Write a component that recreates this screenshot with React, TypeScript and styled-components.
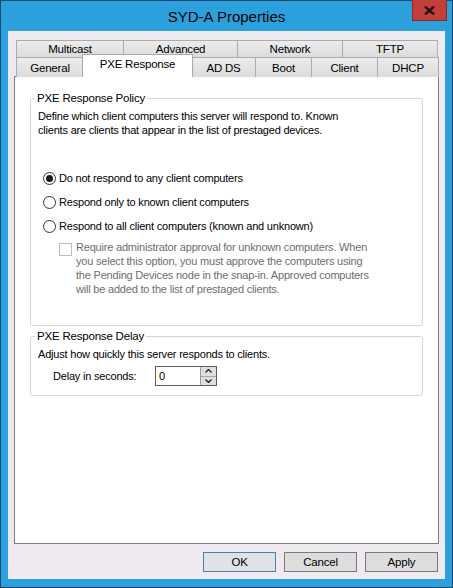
import React from "react";
import styled, { createGlobalStyle, css } from "styled-components";

const GlobalStyle = createGlobalStyle`
  html, body { margin: 0; padding: 0; background: #ffffff; }
  * { box-sizing: border-box; }
  body { font-family: "Liberation Sans", Arial, sans-serif; }
`;

const UI_FONT = `"Liberation Sans", Arial, sans-serif`;

const Window = styled.div`
  width: 453px;
  height: 588px;
  border: 1px solid #17486e;
  background: #2ba0dc;
  display: flex;
  flex-direction: column;
`;

const TitleBar = styled.div`
  position: relative;
  height: 30px;
  display: flex;
  align-items: center;
  justify-content: center;
  flex: none;
`;

const Title = styled.div`
  font-family: ${UI_FONT};
  font-size: 15px;
  color: #000;
  padding-top: 1px;
`;

const CloseButton = styled.div`
  position: absolute;
  top: -1px;
  right: 5px;
  width: 35px;
  height: 21px;
  background: #c3403a;
  border: 1px solid #8e2a27;
  border-top: none;
  display: flex;
  align-items: center;
  justify-content: center;
`;

const Client = styled.div`
  margin: 0 7px 8px 7px;
  height: 548px;
  background: #efeaf0;
  display: flex;
  flex-direction: column;
  padding: 9px 6px 0 6px;
  font-family: ${UI_FONT};
  font-size: 11px;
  letter-spacing: -0.2px;
  color: #000;
`;

const TabStrip = styled.div`
  display: flex;
  flex-direction: column;
  margin: 0 1px 0 2px;
  position: relative;
  z-index: 2;
  margin-bottom: -1px;
`;

const TabRow = styled.div<{ $h: number }>`
  display: flex;
  height: ${(p) => p.$h}px;
  align-items: flex-end;
`;

const Tab = styled.div<{ $w: number; $selected?: boolean; $back?: boolean }>`
  width: ${(p) => p.$w}px;
  height: 100%;
  flex: none;
  border: 1px solid #acacac;
  border-bottom: none;
  background: linear-gradient(#ececec, #dcdcdc);
  display: flex;
  align-items: center;
  justify-content: center;
  font-size: 11.5px;
  padding-top: ${(p) => (p.$back ? 0 : 1)}px;
  & + & { margin-left: -1px; }
  ${(p) =>
    p.$selected &&
    css`
      background: #ffffff;
      height: calc(100% + 3px);
      margin-left: -2px !important;
      margin-right: -1px;
      width: ${p.$w + 3}px;
      padding-top: 0;
      padding-bottom: 4px;
      position: relative;
      z-index: 3;
      border-color: #a8a8a8;
    `}
`;

const Panel = styled.div`
  height: 468px;
  background: #ffffff;
  border: 1px solid #7d7f86;
  padding: 14px 15px 0 15px;
  display: flex;
  flex-direction: column;
  position: relative;
  z-index: 1;
  flex: none;
`;

const Group = styled.fieldset<{ $h: number }>`
  margin: 0;
  height: ${(p) => p.$h}px;
  border: 1px solid #d5d5d5;
  border-radius: 3px;
  padding: 4px 7px 0 7px;
  display: flex;
  flex-direction: column;
  min-width: 0;
  & + & { margin-top: 3px; }
`;

const Legend = styled.legend`
  font-size: 11.5px;
  line-height: 14px;
  padding: 0 2px;
  margin-left: -3px;
`;

const Para = styled.div`
  line-height: 14px;
  white-space: nowrap;
`;

const RadioRow = styled.div<{ $first?: boolean }>`
  display: flex;
  align-items: center;
  height: 16px;
  margin-top: ${(p) => (p.$first ? 33 : 8)}px;
  margin-left: 5px;
  gap: 3px;
  white-space: nowrap;
`;

const RadioCircle = styled.span<{ $checked?: boolean }>`
  width: 13px;
  height: 13px;
  border-radius: 50%;
  border: 1px solid #333;
  background: #fff;
  display: flex;
  align-items: center;
  justify-content: center;
  flex: none;
  &::after {
    content: "";
    width: 7px;
    height: 7px;
    border-radius: 50%;
    background: ${(p) => (p.$checked ? "#1a1a1a" : "transparent")};
  }
`;

const CheckRow = styled.div`
  display: flex;
  margin-top: 6px;
  margin-left: 21px;
  gap: 4px;
  color: #6d6d6d;
`;

const CheckBox = styled.span`
  width: 13px;
  height: 13px;
  margin-top: 3px;
  border: 1px solid #bcbcbc;
  background: #fff;
  flex: none;
`;

const CheckText = styled.div`
  line-height: 14px;
  white-space: nowrap;
`;

const DelayRow = styled.div`
  display: flex;
  align-items: center;
  margin-top: 5px;
  margin-left: 15px;
  height: 20px;
`;

const DelayLabel = styled.span`
  width: 102px;
`;

const SpinInput = styled.div`
  width: 45px;
  height: 20px;
  border: 1px solid #5c5c5c;
  border-right: none;
  background: #fff;
  display: flex;
  align-items: center;
  padding-left: 3px;
`;

const SpinButtons = styled.div`
  display: flex;
  flex-direction: column;
  width: 17px;
  height: 20px;
  border: 1px solid #5c5c5c;
  border-left: 1px solid #9a9a9a;
`;

const SpinBtn = styled.div<{ $top?: boolean }>`
  flex: 1;
  background: #dedede;
  border-bottom: ${(p) => (p.$top ? "1px solid #a8a8a8" : "none")};
  display: flex;
  align-items: center;
  justify-content: center;
`;

const ButtonRow = styled.div`
  display: flex;
  justify-content: flex-end;
  gap: 8px;
  margin-top: 8px;
  padding-right: 1px;
`;

const DialogButton = styled.div<{ $default?: boolean }>`
  width: 73px;
  height: 20px;
  border: 1px solid ${(p) => (p.$default ? "#4a7fae" : "#7a7a7a")};
  background: ${(p) => (p.$default ? "#dfe2e6" : "#dddddd")};
  display: flex;
  align-items: center;
  justify-content: center;
  font-size: 11.5px;
`;

const Chevron = ({ up }: { up?: boolean }) => (
  <svg width="7" height="4" viewBox="0 0 7 4">
    <path
      d={up ? "M0.5 3.5 L3.5 0.5 L6.5 3.5" : "M0.5 0.5 L3.5 3.5 L6.5 0.5"}
      fill="none"
      stroke="#222"
      strokeWidth="1.3"
    />
  </svg>
);

const backTabs = [
  { label: "Multicast", w: 108 },
  { label: "Advanced", w: 115 },
  { label: "Network", w: 106 },
  { label: "TFTP", w: 96 },
];

const frontTabs = [
  { label: "General", w: 68 },
  { label: "PXE Response", w: 108, selected: true },
  { label: "AD DS", w: 65 },
  { label: "Boot", w: 57 },
  { label: "Client", w: 67 },
  { label: "DHCP", w: 62 },
];

export default function App() {
  return (
    <>
      <GlobalStyle />
      <Window>
        <TitleBar>
          <Title>SYD-A Properties</Title>
          <CloseButton>
            <svg width="11" height="9" viewBox="0 0 11 9">
              <path d="M1 0.5 L10 8.5 M10 0.5 L1 8.5" stroke="#2a1010" strokeWidth="2.4" />
            </svg>
          </CloseButton>
        </TitleBar>
        <Client>
          <TabStrip>
            <TabRow $h={17}>
              {backTabs.map((t) => (
                <Tab key={t.label} $w={t.w} $back>
                  {t.label}
                </Tab>
              ))}
            </TabRow>
            <TabRow $h={20}>
              {frontTabs.map((t) => (
                <Tab key={t.label} $w={t.w} $selected={t.selected}>
                  {t.label}
                </Tab>
              ))}
            </TabRow>
          </TabStrip>
          <Panel>
            <Group $h={235}>
              <Legend>PXE Response Policy</Legend>
              <Para>
                Define which client computers this server will respond to. Known
                <br />
                clients are clients that appear in the list of prestaged devices.
              </Para>
              <RadioRow $first>
                <RadioCircle $checked />
                Do not respond to any client computers
              </RadioRow>
              <RadioRow>
                <RadioCircle />
                Respond only to known client computers
              </RadioRow>
              <RadioRow>
                <RadioCircle />
                Respond to all client computers (known and unknown)
              </RadioRow>
              <CheckRow>
                <CheckBox />
                <CheckText>
                  Require administrator approval for unknown computers. When
                  <br />
                  you select this option, you must approve the computers using
                  <br />
                  the Pending Devices node in the snap-in. Approved computers
                  <br />
                  will be added to the list of prestaged clients.
                </CheckText>
              </CheckRow>
            </Group>
            <Group $h={67}>
              <Legend>PXE Response Delay</Legend>
              <Para>Adjust how quickly this server responds to clients.</Para>
              <DelayRow>
                <DelayLabel>Delay in seconds:</DelayLabel>
                <SpinInput>0</SpinInput>
                <SpinButtons>
                  <SpinBtn $top>
                    <Chevron up />
                  </SpinBtn>
                  <SpinBtn>
                    <Chevron />
                  </SpinBtn>
                </SpinButtons>
              </DelayRow>
            </Group>
          </Panel>
          <ButtonRow>
            <DialogButton $default>OK</DialogButton>
            <DialogButton>Cancel</DialogButton>
            <DialogButton>Apply</DialogButton>
          </ButtonRow>
        </Client>
      </Window>
    </>
  );
}
